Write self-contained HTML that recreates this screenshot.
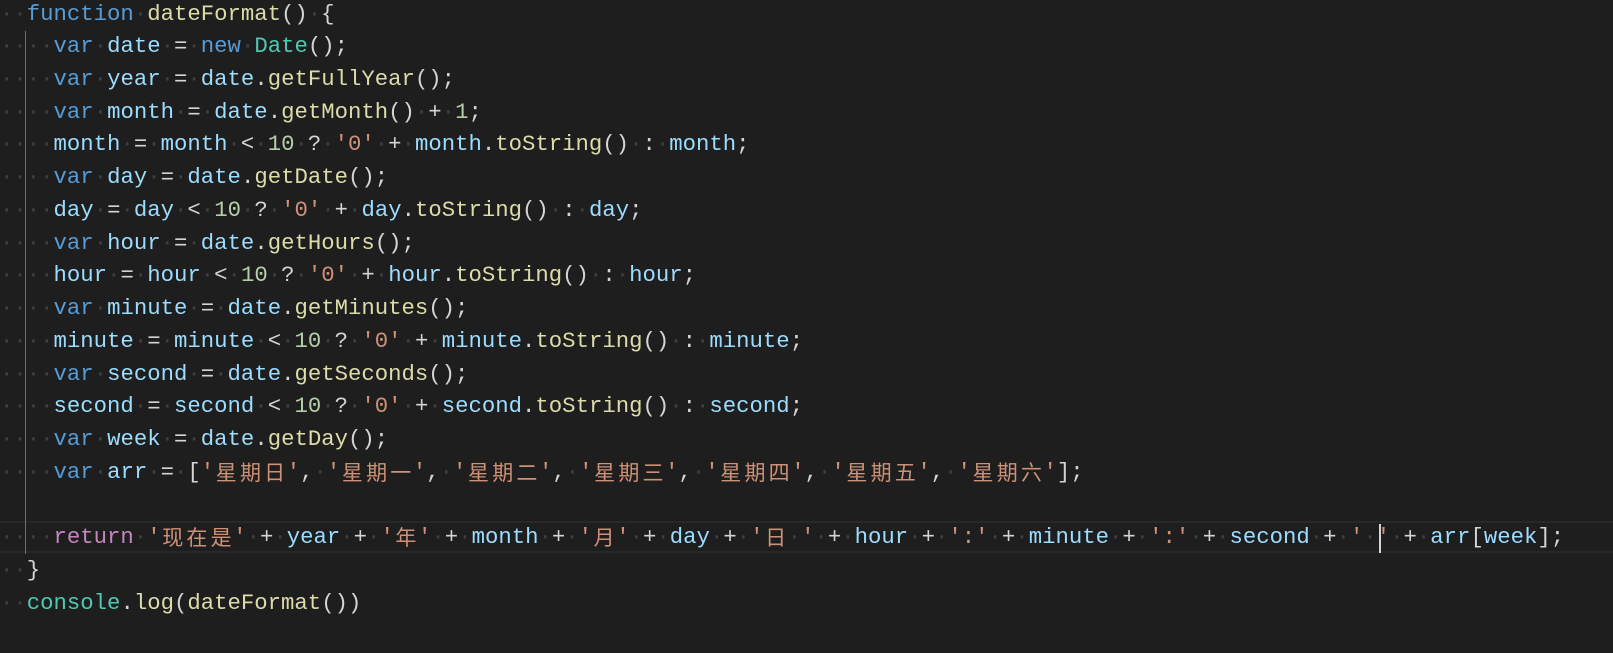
<!DOCTYPE html>
<html><head><meta charset="utf-8">
<style>
html,body{margin:0;padding:0;background:#1e1e1e;width:1613px;height:653px;overflow:hidden}
#code{position:absolute;left:0;top:-2.4px;font-family:"Liberation Mono","Noto Sans CJK SC",monospace;font-size:22.3px;line-height:32.72px;color:#d4d4d4;white-space:normal}
.l{height:32.72px;white-space:pre;overflow:hidden}
i{font-style:normal;color:#3f3f3f}
b{display:inline-block;width:24.2px;font-weight:normal;font-family:"Noto Sans CJK SC",sans-serif;font-size:21px;text-align:center;vertical-align:top;line-height:32.72px;height:32.72px}
.k{color:#569cd6}.v{color:#9cdcfe}.f{color:#dcdcaa}.t{color:#4ec9b0}.n{color:#b5cea8}.s{color:#ce9178}.r{color:#c586c0}
#guide{position:absolute;left:25px;top:31px;width:1px;height:523px;background:#6e6e6e}
#cur{position:absolute;left:0;top:521px;width:1613px;height:32px;border-top:2px solid #282828;border-bottom:2px solid #282828;box-sizing:border-box}
#caret{position:absolute;left:1379px;top:524px;width:2px;height:29px;background:#d4d4d4}
</style></head><body>
<div id="cur"></div>
<div id="guide"></div>
<div id="code"><div class="l"><i>··</i><span class="k">function</span><i>·</i><span class="f">dateFormat</span>()<i>·</i>{</div><div class="l"><i>····</i><span class="k">var</span><i>·</i><span class="v">date</span><i>·</i>=<i>·</i><span class="k">new</span><i>·</i><span class="t">Date</span>();</div><div class="l"><i>····</i><span class="k">var</span><i>·</i><span class="v">year</span><i>·</i>=<i>·</i><span class="v">date</span>.<span class="f">getFullYear</span>();</div><div class="l"><i>····</i><span class="k">var</span><i>·</i><span class="v">month</span><i>·</i>=<i>·</i><span class="v">date</span>.<span class="f">getMonth</span>()<i>·</i>+<i>·</i><span class="n">1</span>;</div><div class="l"><i>····</i><span class="v">month</span><i>·</i>=<i>·</i><span class="v">month</span><i>·</i>&lt;<i>·</i><span class="n">10</span><i>·</i>?<i>·</i><span class="s">'0'</span><i>·</i>+<i>·</i><span class="v">month</span>.<span class="f">toString</span>()<i>·</i>:<i>·</i><span class="v">month</span>;</div><div class="l"><i>····</i><span class="k">var</span><i>·</i><span class="v">day</span><i>·</i>=<i>·</i><span class="v">date</span>.<span class="f">getDate</span>();</div><div class="l"><i>····</i><span class="v">day</span><i>·</i>=<i>·</i><span class="v">day</span><i>·</i>&lt;<i>·</i><span class="n">10</span><i>·</i>?<i>·</i><span class="s">'0'</span><i>·</i>+<i>·</i><span class="v">day</span>.<span class="f">toString</span>()<i>·</i>:<i>·</i><span class="v">day</span>;</div><div class="l"><i>····</i><span class="k">var</span><i>·</i><span class="v">hour</span><i>·</i>=<i>·</i><span class="v">date</span>.<span class="f">getHours</span>();</div><div class="l"><i>····</i><span class="v">hour</span><i>·</i>=<i>·</i><span class="v">hour</span><i>·</i>&lt;<i>·</i><span class="n">10</span><i>·</i>?<i>·</i><span class="s">'0'</span><i>·</i>+<i>·</i><span class="v">hour</span>.<span class="f">toString</span>()<i>·</i>:<i>·</i><span class="v">hour</span>;</div><div class="l"><i>····</i><span class="k">var</span><i>·</i><span class="v">minute</span><i>·</i>=<i>·</i><span class="v">date</span>.<span class="f">getMinutes</span>();</div><div class="l"><i>····</i><span class="v">minute</span><i>·</i>=<i>·</i><span class="v">minute</span><i>·</i>&lt;<i>·</i><span class="n">10</span><i>·</i>?<i>·</i><span class="s">'0'</span><i>·</i>+<i>·</i><span class="v">minute</span>.<span class="f">toString</span>()<i>·</i>:<i>·</i><span class="v">minute</span>;</div><div class="l"><i>····</i><span class="k">var</span><i>·</i><span class="v">second</span><i>·</i>=<i>·</i><span class="v">date</span>.<span class="f">getSeconds</span>();</div><div class="l"><i>····</i><span class="v">second</span><i>·</i>=<i>·</i><span class="v">second</span><i>·</i>&lt;<i>·</i><span class="n">10</span><i>·</i>?<i>·</i><span class="s">'0'</span><i>·</i>+<i>·</i><span class="v">second</span>.<span class="f">toString</span>()<i>·</i>:<i>·</i><span class="v">second</span>;</div><div class="l"><i>····</i><span class="k">var</span><i>·</i><span class="v">week</span><i>·</i>=<i>·</i><span class="v">date</span>.<span class="f">getDay</span>();</div><div class="l"><i>····</i><span class="k">var</span><i>·</i><span class="v">arr</span><i>·</i>=<i>·</i>[<span class="s">'<b>星</b><b>期</b><b>日</b>'</span>,<i>·</i><span class="s">'<b>星</b><b>期</b><b>一</b>'</span>,<i>·</i><span class="s">'<b>星</b><b>期</b><b>二</b>'</span>,<i>·</i><span class="s">'<b>星</b><b>期</b><b>三</b>'</span>,<i>·</i><span class="s">'<b>星</b><b>期</b><b>四</b>'</span>,<i>·</i><span class="s">'<b>星</b><b>期</b><b>五</b>'</span>,<i>·</i><span class="s">'<b>星</b><b>期</b><b>六</b>'</span>];</div><div class="l"> </div><div class="l"><i>····</i><span class="r">return</span><i>·</i><span class="s">'<b>现</b><b>在</b><b>是</b>'</span><i>·</i>+<i>·</i><span class="v">year</span><i>·</i>+<i>·</i><span class="s">'<b>年</b>'</span><i>·</i>+<i>·</i><span class="v">month</span><i>·</i>+<i>·</i><span class="s">'<b>月</b>'</span><i>·</i>+<i>·</i><span class="v">day</span><i>·</i>+<i>·</i><span class="s">'<b>日</b><i>·</i>'</span><i>·</i>+<i>·</i><span class="v">hour</span><i>·</i>+<i>·</i><span class="s">':'</span><i>·</i>+<i>·</i><span class="v">minute</span><i>·</i>+<i>·</i><span class="s">':'</span><i>·</i>+<i>·</i><span class="v">second</span><i>·</i>+<i>·</i><span class="s">'<i>·</i>'</span><i>·</i>+<i>·</i><span class="v">arr</span>[<span class="v">week</span>];</div><div class="l"><i>··</i>}</div><div class="l"><i>··</i><span class="t">console</span>.<span class="f">log</span>(<span class="f">dateFormat</span>())</div></div>
<div id="caret"></div>
</body></html>
